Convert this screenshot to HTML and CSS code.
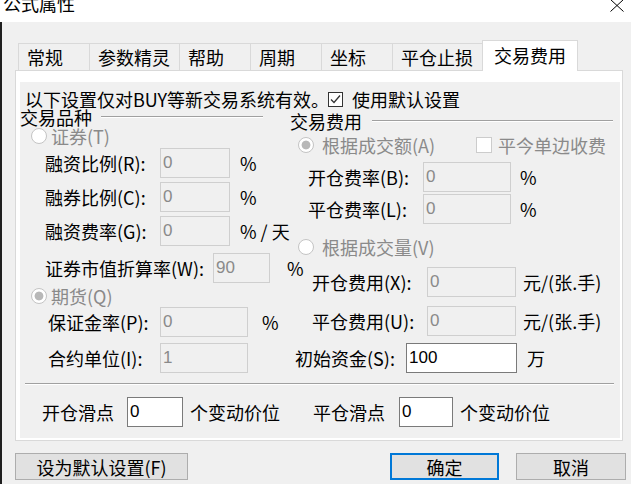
FILE: index.html
```html
<!DOCTYPE html>
<html lang="zh-CN">
<head>
    <meta charset="UTF-8">
    <meta name="viewport" content="width=device-width, initial-scale=1.0">
    <title>公式属性</title>
    <link rel="stylesheet" href="styles.css">
</head>
<body>
    <div class="window">
        <div class="titlebar">
            <span class="title">公式属性</span>
            <svg class="close" width="14" height="13" viewBox="0 0 14 13">
                <path d="M0.5 0.5L13.5 12.5M13.5 0.5L0.5 12.5" stroke="#000" stroke-width="1" fill="none"/>
            </svg>
        </div>

        <div class="client">
            <div class="tabs">
                <div class="tab">常规</div>
                <div class="tab wide">参数精灵</div>
                <div class="tab">帮助</div>
                <div class="tab">周期</div>
                <div class="tab">坐标</div>
                <div class="tab wide">平仓止损</div>
                <div class="tab active">交易费用</div>
            </div>

            <div class="panel">
                <div class="page">
                    <div class="notice">
                        <span class="notice-text">以下设置仅对BUY等新交易系统有效。</span>
                        <span class="check on">
                            <svg width="13" height="13" viewBox="0 0 13 13">
                                <path d="M2 6.5L5 9.5L11 2.5" stroke="#333" stroke-width="1.3" fill="none"/>
                            </svg>
                        </span>
                        <span class="check-label">使用默认设置</span>
                    </div>

                    <div class="columns">
                        <!-- 交易品种 -->
                        <div class="col col-left">
                            <div class="group-head"><span>交易品种</span><span class="rule"></span></div>
                            <div class="choice"><span class="radio"></span><span class="dim">证券(T)</span></div>
                            <div class="row rz">
                                <span class="lbl">融资比例(R):</span>
                                <input class="field" type="text" value="0" disabled>
                                <span class="unit">%</span>
                            </div>
                            <div class="row rz mt4">
                                <span class="lbl">融券比例(C):</span>
                                <input class="field" type="text" value="0" disabled>
                                <span class="unit">%</span>
                            </div>
                            <div class="row rz mt4">
                                <span class="lbl">融资费率(G):</span>
                                <input class="field" type="text" value="0" disabled>
                                <span class="unit">% / 天</span>
                            </div>
                            <div class="row zs mt7">
                                <span class="lbl">证券市值折算率(W):</span>
                                <input class="field" type="text" value="90" disabled>
                                <span class="unit">%</span>
                            </div>
                            <div class="choice small mt2"><span class="radio dot"></span><span class="dim">期货(Q)</span></div>
                            <div class="row qh">
                                <span class="lbl">保证金率(P):</span>
                                <input class="field" type="text" value="0" disabled>
                                <span class="unit">%</span>
                            </div>
                            <div class="row qh mt6">
                                <span class="lbl">合约单位(I):</span>
                                <input class="field" type="text" value="1" disabled>
                            </div>
                        </div>

                        <!-- 交易费用 -->
                        <div class="col col-right">
                            <div class="group-head"><span>交易费用</span><span class="rule"></span></div>
                            <div class="choice tall mt2">
                                <span class="radio dot"></span><span class="dim choice-text">根据成交额(A)</span>
                                <span class="check off"></span><span class="dim check-text">平今单边收费</span>
                            </div>
                            <div class="row fl mt2">
                                <span class="lbl">开仓费率(B):</span>
                                <input class="field" type="text" value="0" disabled>
                                <span class="unit">%</span>
                            </div>
                            <div class="row fl mt2">
                                <span class="lbl">平仓费率(L):</span>
                                <input class="field" type="text" value="0" disabled>
                                <span class="unit">%</span>
                            </div>
                            <div class="choice tall mt8">
                                <span class="radio"></span><span class="dim choice-text">根据成交量(V)</span>
                            </div>
                            <div class="row fy mt5">
                                <span class="lbl">开仓费用(X):</span>
                                <input class="field" type="text" value="0" disabled>
                                <span class="unit">元/(张.手)</span>
                            </div>
                            <div class="row fy mt9">
                                <span class="lbl">平仓费用(U):</span>
                                <input class="field" type="text" value="0" disabled>
                                <span class="unit">元/(张.手)</span>
                            </div>
                            <div class="row zj mt7">
                                <span class="lbl">初始资金(S):</span>
                                <input class="field live" type="text" value="100">
                                <span class="unit">万</span>
                            </div>
                        </div>
                    </div>

                    <div class="sep"></div>

                    <div class="row slip">
                        <span class="lbl open">开仓滑点</span>
                        <input class="field live open" type="text" value="0">
                        <span class="unit open">个变动价位</span>
                        <span class="lbl close-lbl">平仓滑点</span>
                        <input class="field live close-in" type="text" value="0">
                        <span class="unit">个变动价位</span>
                    </div>
                </div>
            </div>

            <div class="actions">
                <button class="btn btn-default">设为默认设置(F)</button>
                <button class="btn btn-ok">确定</button>
                <button class="btn btn-cancel">取消</button>
            </div>
        </div>
    </div>
</body>
</html>
```

FILE: styles.css
```css
:root {
    --face: #f0f0f0;
    --edge: #d9d9d9;
    --etch: #a0a0a0;
    --dim: #8a8a8a;
}

* {
    margin: 0;
    padding: 0;
    box-sizing: border-box;
}

body {
    width: 631px;
    height: 484px;
    overflow: hidden;
    background: var(--face);
    font-family: "Noto Sans CJK SC", sans-serif;
    font-size: 18px;
    line-height: 18px;
    color: #000;
}

.window {
    height: 484px;
    display: flex;
    flex-direction: column;
}

/* title bar */
.titlebar {
    height: 22px;
    flex: none;
    background: #fff;
    display: flex;
    justify-content: space-between;
    align-items: flex-start;
    padding: 0 7px 0 3px;
    overflow: hidden;
}

.title {
    margin-top: -6px;
}

.close {
    margin-top: -1px;
}

.client {
    flex: 1;
    border-left: 2px solid #1f1f1f;
    padding-top: 18px;
}

/* tabs */
.tabs {
    display: flex;
    align-items: flex-end;
    height: 31px;
    margin-left: 16px;
    margin-bottom: -1px;
    position: relative;
    z-index: 1;
}

.tab {
    width: 72px;
    height: 27px;
    margin-bottom: 1px;
    margin-left: -1px;
    padding-left: 8px;
    border: 1px solid var(--edge);
    border-bottom: none;
    background: var(--face);
    display: flex;
    align-items: center;
    white-space: nowrap;
}

.tab:first-child {
    margin-left: 0;
}

.tab.wide {
    width: 91px;
}

.tab.active {
    width: 96px;
    height: 31px;
    margin-bottom: 0;
    padding-left: 11px;
    padding-bottom: 2px;
    background: #fff;
}

.panel {
    margin-left: 13px;
    width: 608px;
    height: 371px;
    border: 1px solid var(--edge);
    background: #fff;
    padding: 11px 2px 2px 4px;
}

.page {
    height: 100%;
    background: var(--face);
    display: flex;
    flex-direction: column;
}

/* notice line */
.notice {
    display: flex;
    align-items: center;
    height: 22px;
    margin-top: 6px;
    padding-left: 5px;
}

.notice-text {
    width: 303px;
    flex: none;
    white-space: nowrap;
}

.check {
    width: 15px;
    height: 15px;
    flex: none;
    border: 1px solid #333;
    background: #fff;
    display: flex;
    align-items: center;
    justify-content: center;
}

.check.off {
    width: 16px;
    height: 16px;
    border-color: #cccccc;
}

.check-label {
    margin-left: 9px;
}

/* columns */
.columns {
    display: flex;
}

.col {
    display: flex;
    flex-direction: column;
}

.col-left {
    width: 270px;
}

.col-right {
    flex: 1;
}

.group-head {
    display: flex;
    align-items: center;
    height: 14px;
    white-space: nowrap;
}

.rule {
    height: 2px;
    flex: none;
    border-top: 1px solid var(--etch);
    border-bottom: 1px solid #fff;
}

.col-left .rule {
    width: 162px;
    margin-left: 9px;
}

.col-right .group-head {
    margin-top: 4px;
}

.col-right .rule {
    width: 241px;
    margin-left: 10px;
}

.choice {
    display: flex;
    align-items: center;
    height: 24px;
    flex: none;
    padding-left: 11px;
    white-space: nowrap;
}

.choice.small {
    height: 22px;
}

.choice.tall {
    height: 30px;
    padding-left: 8px;
}

.radio {
    width: 16px;
    height: 16px;
    flex: none;
    border-radius: 50%;
    border: 1px solid #c4c4c4;
    background: #fff;
}

.radio.dot {
    background: radial-gradient(circle, #b8b8b8 0, #b8b8b8 4px, #fff 4.8px);
}

.dim {
    color: var(--dim);
    margin-left: 4px;
}

.choice-text {
    width: 154px;
    margin-left: 8px;
}

.check-text {
    margin-left: 6px;
}

/* label + field rows */
.row {
    display: flex;
    align-items: center;
    height: 30px;
    flex: none;
    white-space: nowrap;
}

.lbl {
    flex: none;
}

.field {
    flex: none;
    height: 30px;
    border: 1px solid #cfcfcf;
    background: var(--face);
    color: #8a8a8a;
    font-family: "Liberation Sans", sans-serif;
    font-size: 17px;
    padding: 0 0 0 2px;
    outline: none;
}

.field.live {
    background: #fff;
    border-color: #7a7a7a;
    color: #000;
}

.unit {
    flex: none;
}

.mt2 { margin-top: 2px; }
.mt4 { margin-top: 4px; }
.mt5 { margin-top: 5px; }
.mt6 { margin-top: 6px; }
.mt7 { margin-top: 7px; }
.mt8 { margin-top: 8px; }
.mt9 { margin-top: 9px; }

.rz { padding-left: 25px; }
.rz .lbl { width: 115px; }
.rz .field { width: 70px; }
.rz .unit { margin-left: 10px; }

.zs { padding-left: 25px; }
.zs .lbl { width: 168px; }
.zs .field { width: 57px; }
.zs .unit { margin-left: 17px; }

.qh { padding-left: 28px; }
.qh .lbl { width: 112px; }
.qh .field { width: 88px; }
.qh .unit { margin-left: 14px; }

.fl { padding-left: 18px; }
.fl .lbl { width: 115px; }
.fl .field { width: 88px; }
.fl .unit { margin-left: 9px; }

.fy { padding-left: 22px; }
.fy .lbl { width: 115px; }
.fy .field { width: 89px; }
.fy .unit { margin-left: 7px; }

.zj { padding-left: 5px; }
.zj .lbl { width: 111px; }
.zj .field { width: 111px; }
.zj .unit { margin-left: 10px; }

.sep {
    height: 2px;
    flex: none;
    margin: 10px 6px 0 5px;
    border-top: 1px solid var(--etch);
    border-bottom: 1px solid #fff;
}

.slip {
    margin-top: 12px;
    padding-left: 22px;
}

.slip .lbl.open { width: 85px; }
.slip .field.open { width: 56px; }
.slip .unit.open { width: 123px; }
.slip .unit { margin-left: 7px; }
.slip .close-lbl { width: 86px; }
.slip .close-in { width: 54px; }

/* buttons */
.actions {
    display: flex;
    margin-top: 12px;
    padding: 0 5px 0 13px;
}

.btn {
    height: 27px;
    border: 1px solid #adadad;
    background: #e1e1e1;
    font-family: inherit;
    font-size: 18px;
    line-height: 18px;
    color: #000;
    padding: 0;
    display: flex;
    align-items: center;
    justify-content: center;
}

.btn-default {
    width: 173px;
}

.btn-ok {
    width: 109px;
    margin-left: auto;
    border: 2px solid #0078d7;
}

.btn-cancel {
    width: 110px;
    margin-left: 17px;
}
```
